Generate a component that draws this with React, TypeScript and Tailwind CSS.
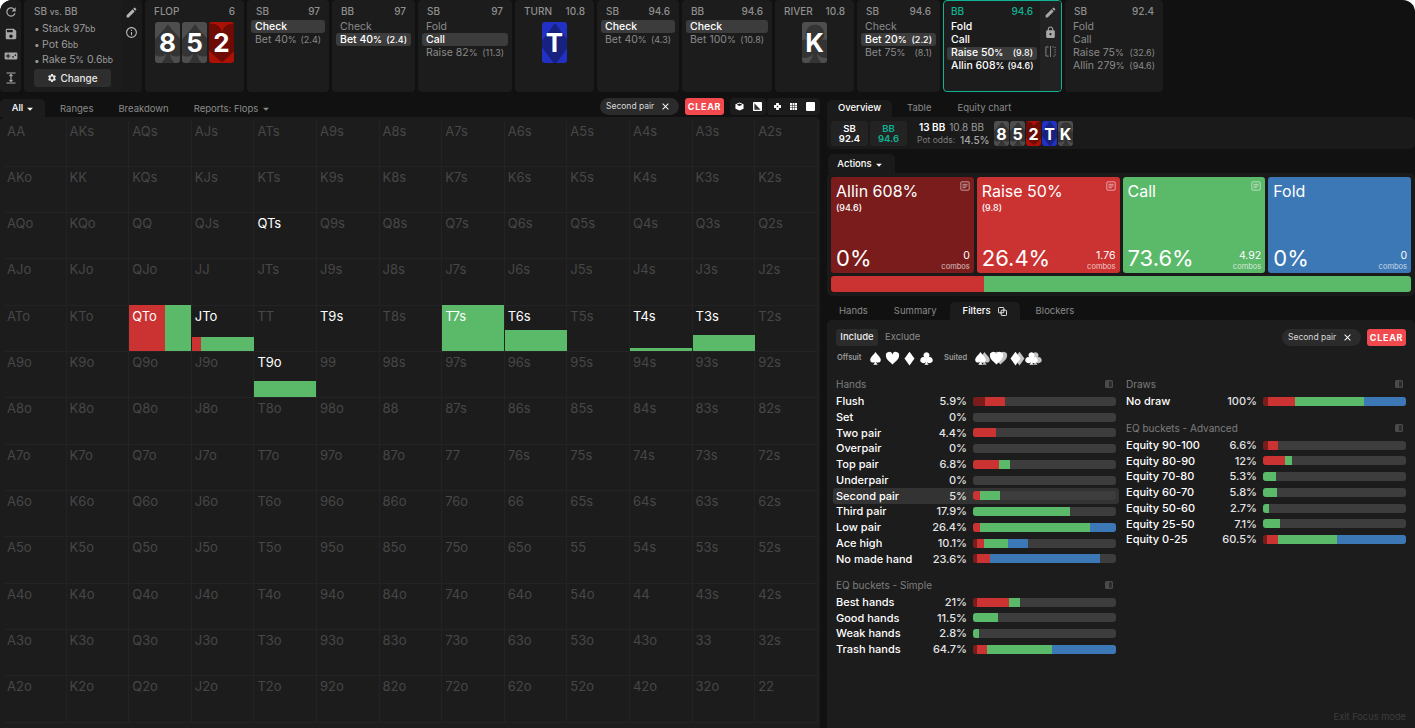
import React from "react";
import { MdEdit, MdLock, MdSave, MdVideogameAsset, MdSettings, MdRefresh, MdOutlineInfo, MdClose, MdArrowDropDown } from "react-icons/md";

type SuitName = "s" | "h" | "d" | "c";
const SUIT: Record<SuitName, string> = {
  s: "M12 1.5C9 6.5 3.5 9.5 3.5 14.2a4.3 4.3 0 0 0 7.4 3c-.2 1.9-1 3.3-2.5 4.8h7.2c-1.5-1.5-2.3-2.9-2.5-4.8a4.3 4.3 0 0 0 7.4-3C20.5 9.5 15 6.5 12 1.5z",
  h: "M12 21.5C5 15.5 1.5 12 1.5 7.7A5.3 5.3 0 0 1 12 5.8 5.3 5.3 0 0 1 22.5 7.7C22.5 12 19 15.5 12 21.5z",
  d: "M12 1 L20 12 L12 23 L4 12z",
  c: "M12 2a4.8 4.8 0 0 0-3.7 7.9A4.8 4.8 0 1 0 11 17c-.2 1.9-1 3.4-2.5 5h7c-1.5-1.6-2.3-3.1-2.5-5a4.8 4.8 0 1 0 2.7-7.1A4.8 4.8 0 0 0 12 2z",
};

function Suit({ s, className }: { s: SuitName; className?: string }) {
  return (
    <svg viewBox="0 0 24 24" className={className} fill="currentColor">
      <path d={SUIT[s]} />
    </svg>
  );
}

const CARD: Record<SuitName, string> = {
  s: "bg-[#4e4e4e] text-[#343434]",
  h: "bg-[#ad1005] text-[#6d0b04]",
  d: "bg-[#2131c6] text-[#17217f]",
  c: "bg-[#4e4e4e] text-[#343434]",
};

function PlayCard({ r, s, small }: { r: string; s: SuitName; small?: boolean }) {
  return (
    <div className={`relative overflow-hidden flex items-center justify-center rounded-[3px] ${CARD[s]} ${small ? "w-[15px] h-[25px]" : "w-[25px] h-[41px]"}`}>
      <Suit s={s} className={small ? "absolute w-[28px] h-[28px] left-[-6px] top-[-1px]" : "absolute w-[46px] h-[46px] left-[-10px] top-[-1px]"} />
      <span className={`relative text-white font-bold ${small ? "text-[16px]" : "text-[26px]"}`}>{r}</span>
    </div>
  );
}

function StreetCard({ title, value, r, w }: { title: string; value: string; r: [string, SuitName][]; w: string }) {
  return (
    <div className={`${w} h-[92px] shrink-0 rounded-[4px] bg-[#1c1c1c] px-[9px] pt-[5px]`}>
      <div className="flex justify-between text-[10px] font-medium text-[#8f8f8f] leading-[12px] h-[12px]">
        <span>{title}</span>
        <span>{value}</span>
      </div>
      <div className="flex justify-center gap-[2px] mt-[5px]">
        {r.map(([a, b]) => (
          <PlayCard key={a} r={a} s={b} />
        ))}
      </div>
    </div>
  );
}

type Act = { l: string; p?: string; sz?: string; on?: boolean; bright?: boolean };

function ActionRow({ a, teal }: { a: Act; teal?: boolean }) {
  const color = a.on || teal ? "text-white font-medium" : "text-[#8a8a8a]";
  return (
    <div className={`flex justify-between items-center h-[13px] px-[4px] rounded-[3px] text-[10.5px] whitespace-nowrap ${a.on ? "bg-[#3c3c3c]" : ""} ${color}`}>
      <span>
        {a.l}
        {a.p && <span className="text-[9px]">%</span>}
      </span>
      {a.sz && <span className="text-[9px] ml-[3px]">({a.sz})</span>}
    </div>
  );
}

function BetCard({ who, value, rows, w }: { who: string; value: string; rows: Act[]; w: string }) {
  return (
    <div className={`${w} h-[92px] shrink-0 rounded-[4px] bg-[#1c1c1c] px-[4px] pt-[5px]`}>
      <div className="flex justify-between text-[10px] font-medium text-[#8f8f8f] leading-[12px] h-[12px] px-[5px] mb-[3px]">
        <span>{who}</span>
        <span>{value}</span>
      </div>
      {rows.map((a) => (
        <ActionRow key={a.l} a={a} />
      ))}
    </div>
  );
}

function Pill({ className }: { className?: string }) {
  return (
    <div className={`flex items-center justify-between h-[17px] w-[79px] rounded-full bg-[#2b2b2b] pl-[6px] pr-[8px] text-[8.5px] text-[#d8d8d8] ${className ?? ""}`}>
      <span>Second pair</span>
      <MdClose className="w-[11px] h-[11px] text-white" />
    </div>
  );
}

function ClearBtn() {
  return (
    <div className="flex items-center justify-center h-[17px] w-[39px] rounded-[3px] bg-[#f2494f] text-[9px] font-bold tracking-[0.08em] text-white">CLEAR</div>
  );
}

const RANKS = ["A", "K", "Q", "J", "T", "9", "8", "7", "6", "5", "4", "3", "2"];
const BRIGHT = new Set(["QTs", "QTo", "JTo", "T9s", "T7s", "T6s", "T4s", "T3s", "T9o"]);
const CELLBAR: Record<string, { h: number; r: number; g: number }> = {
  QTo: { h: 46, r: 36, g: 26 },
  JTo: { h: 14, r: 9, g: 53 },
  T9o: { h: 16, r: 0, g: 62 },
  T7s: { h: 46, r: 0, g: 62 },
  T6s: { h: 21, r: 0, g: 62 },
  T4s: { h: 3, r: 0, g: 62 },
  T3s: { h: 16, r: 0, g: 62 },
};

function Cell({ label }: { label: string }) {
  const bar = CELLBAR[label];
  return (
    <div className="relative border-r border-b border-[#232323] pl-[3px] pt-[2px] text-[13px] leading-[16px]">
      {bar && (
        <div className="absolute left-0 bottom-0 flex" style={{ height: bar.h }}>
          {bar.r > 0 && <div className="bg-[#cb3232]" style={{ width: bar.r }} />}
          <div className="bg-[#5bb96a]" style={{ width: bar.g }} />
        </div>
      )}
      <span className={`relative ${BRIGHT.has(label) ? "text-white" : "text-[#474747]"}`}>{label}</span>
    </div>
  );
}

type Seg = [number, number, number, number];
type Row = { n: string; p: string; s: Seg; hl?: boolean };

function StatBar({ s }: { s: Seg }) {
  const colors = ["bg-[#7a1c1c]", "bg-[#cb3232]", "bg-[#5bb96a]", "bg-[#3b78b5]"];
  return (
    <div className="flex h-[9px] w-[143px] shrink-0 overflow-hidden rounded-[3px] bg-[#3d3d3d]">
      {s.map((w, i) => (w > 0 ? <div key={i} className={colors[i]} style={{ width: w }} /> : null))}
    </div>
  );
}

function SectionHead({ title }: { title: string }) {
  return (
    <div className="flex items-center justify-between h-[16px] text-[10px] text-[#7d7d7d]">
      <span>{title}</span>
      <svg viewBox="0 0 10 10" className="w-[8px] h-[8px] mr-[3px]">
        <rect x="0" y="0" width="10" height="10" rx="2" fill="#4a4a4a" />
        <rect x="5" y="1.5" width="3.5" height="7" rx="0.5" fill="#2a2a2a" />
      </svg>
    </div>
  );
}

function Stat({ r }: { r: Row }) {
  return (
    <div className={`flex items-center h-[15.75px] -mx-[3px] px-[3px] rounded-[3px] ${r.hl ? "bg-[#333333]" : ""}`}>
      <span className="flex-1 text-[11px] font-medium text-white whitespace-nowrap">{r.n}</span>
      <span className="text-[11px] font-medium text-[#e4e4e4] mr-[6px]">{r.p}</span>
      <StatBar s={r.s} />
    </div>
  );
}

const HANDS: Row[] = [
  { n: "Flush", p: "5.9%", s: [11.5, 20.5, 0, 0] },
  { n: "Set", p: "0%", s: [0, 0, 0, 0] },
  { n: "Two pair", p: "4.4%", s: [0, 23, 0, 0] },
  { n: "Overpair", p: "0%", s: [0, 0, 0, 0] },
  { n: "Top pair", p: "6.8%", s: [0, 26, 11, 0] },
  { n: "Underpair", p: "0%", s: [0, 0, 0, 0] },
  { n: "Second pair", p: "5%", s: [0, 7, 20, 0], hl: true },
  { n: "Third pair", p: "17.9%", s: [0, 0, 97, 0] },
  { n: "Low pair", p: "26.4%", s: [0, 7, 110, 26] },
  { n: "Ace high", p: "10.1%", s: [4, 6.5, 24, 20] },
  { n: "No made hand", p: "23.6%", s: [4, 13, 0, 110] },
];
const SIMPLE: Row[] = [
  { n: "Best hands", p: "21%", s: [4, 31.5, 11, 0] },
  { n: "Good hands", p: "11.5%", s: [0, 0, 25, 0] },
  { n: "Weak hands", p: "2.8%", s: [0, 0, 6, 0] },
  { n: "Trash hands", p: "64.7%", s: [4, 10, 65, 64] },
];
const DRAWS: Row[] = [{ n: "No draw", p: "100%", s: [5, 27, 69, 42] }];
const ADV: Row[] = [
  { n: "Equity 90-100", p: "6.6%", s: [5, 10, 0, 0] },
  { n: "Equity 80-90", p: "12%", s: [0, 22, 6.5, 0] },
  { n: "Equity 70-80", p: "5.3%", s: [0, 0, 12.5, 0] },
  { n: "Equity 60-70", p: "5.8%", s: [0, 0, 13.5, 0] },
  { n: "Equity 50-60", p: "2.7%", s: [0, 0, 6, 0] },
  { n: "Equity 25-50", p: "7.1%", s: [0, 0, 16.5, 0] },
  { n: "Equity 0-25", p: "60.5%", s: [4, 11, 59, 69] },
];

function NoteIcon() {
  return (
    <svg viewBox="0 0 12 12" className="absolute top-[4px] right-[4px] w-[10px] h-[10px]" fill="none" stroke="#ffffff" strokeOpacity="0.65" strokeWidth="1">
      <rect x="1" y="1" width="10" height="10" rx="1" />
      <path d="M3 4h6M3 6h6M3 8h4" />
    </svg>
  );
}

function ActionCard({ title, sub, pct, combos, bg, note }: { title: string; sub?: string; pct: string; combos: string; bg: string; note?: boolean }) {
  return (
    <div className={`relative flex-1 rounded-[3px] ${bg} flex flex-col justify-between pl-[5px] pr-[4px] pt-[4px] text-white`}>
      {note && <NoteIcon />}
      <div>
        <div className="text-[16px] leading-[20px]">{title}</div>
        {sub && <div className="text-[9px] font-medium leading-[12px] mt-[1px]">{sub}</div>}
      </div>
      <div className="flex items-end justify-between pb-[1px]">
        <span className="text-[22px] leading-[28px]">{pct}</span>
        <div className="text-right">
          <div className="text-[10.5px] leading-[12px]">{combos}</div>
          <div className="text-[7.5px] leading-[10px] opacity-70">combos</div>
        </div>
      </div>
    </div>
  );
}

function SuitBtn({ s, dbl, className }: { s: SuitName; dbl?: boolean; className?: string }) {
  return (
    <div className={`relative w-[14px] h-[14px] text-white ${className ?? ""}`}>
      {dbl && <Suit s={s} className="absolute left-[4px] top-[-0.5px] w-[15px] h-[15px] text-[#c4c4c4]" />}
      <Suit s={s} className="absolute left-0 top-[-0.5px] w-[15px] h-[15px]" />
    </div>
  );
}

function UnfoldIcon() {
  return (
    <svg viewBox="0 0 12 12" className="w-[12px] h-[12px]" fill="none" stroke="#a8a8a8" strokeWidth="1.1">
      <path d="M1.5 1h9M1.5 11h9M6 2.5v7M4.5 4 6 2.5 7.5 4M4.5 8 6 9.5 7.5 8" />
    </svg>
  );
}

export default function App() {
  return (
    <div className="h-[728px] w-[1415px] overflow-hidden bg-white" style={{ fontFamily: "Inter, 'Noto Sans', sans-serif" }}>
      <div className="flex h-full flex-col rounded-t-[12px] bg-[#111111] text-white">
        {/* top strip */}
        <div className="flex h-[92px] shrink-0 gap-[3px]">
          <div className="w-[21px] h-[92px] shrink-0 rounded-tl-[12px] rounded-r-[4px] rounded-bl-[4px] bg-[#1c1c1c] flex flex-col items-center pt-[5px] gap-[8px] text-[#a8a8a8] text-[14px]">
            <MdRefresh className="w-[14px] h-[14px]" />
            <MdSave className="w-[14px] h-[14px]" />
            <MdVideogameAsset className="w-[14px] h-[14px]" />
            <div className="flex h-[14px] items-center"><UnfoldIcon /></div>
          </div>
          <div className="w-[118px] h-[92px] shrink-0 flex rounded-[4px] bg-[#1c1c1c]">
            <div className="w-[97px] pl-[10px] pt-[5px]">
              <div className="text-[10px] font-medium text-[#8f8f8f] leading-[12px] mb-[3px]">SB <span className="text-[8.5px]">vs.</span> BB</div>
              {[["Stack 97", "bb"], ["Pot 6", "bb"], ["Rake 5", "% 0.6", "bb"]].map((t) => (
                <div key={t[0]} className="flex items-center h-[15.7px] text-[10.5px] text-[#9a9a9a] whitespace-nowrap">
                  <span className="w-[8px] pl-[0px] text-[10px]">•</span>
                  <span>{t[0]}<span className="text-[8.5px]">{t.length === 3 ? "%" : t[1]}</span>{t.length === 3 && " 0.6"}{t.length === 3 && <span className="text-[8.5px]">bb</span>}</span>
                </div>
              ))}
              <div className="mt-[1px] flex h-[18px] w-[77px] items-center justify-center gap-[3px] rounded-[3px] bg-[#2e2e2e] text-[10px] font-medium text-[#e8e8e8]">
                <MdSettings className="w-[10px] h-[10px]" />
                Change
              </div>
            </div>
            <div className="flex-1 flex flex-col items-center pt-[6px] gap-[7px] rounded-r-[4px] bg-[#1a1a1a] text-[#b5b5b5]">
              <MdEdit className="w-[13px] h-[13px]" />
              <MdOutlineInfo className="w-[13px] h-[13px]" />
            </div>
          </div>
          <StreetCard title="FLOP" value="6" w="w-[99px]" r={[["8", "s"], ["5", "s"], ["2", "h"]]} />
          <BetCard who="SB" value="97" w="w-[82px]" rows={[{ l: "Check", on: true }, { l: "Bet 40", p: "%", sz: "2.4" }]} />
          <BetCard who="BB" value="97" w="w-[83px]" rows={[{ l: "Check" }, { l: "Bet 40", p: "%", sz: "2.4", on: true }]} />
          <BetCard who="SB" value="97" w="w-[94px]" rows={[{ l: "Fold" }, { l: "Call", on: true }, { l: "Raise 82", p: "%", sz: "11.3" }]} />
          <StreetCard title="TURN" value="10.8" w="w-[79px]" r={[["T", "d"]]} />
          <BetCard who="SB" value="94.6" w="w-[82px]" rows={[{ l: "Check", on: true }, { l: "Bet 40", p: "%", sz: "4.3" }]} />
          <BetCard who="BB" value="94.6" w="w-[90px]" rows={[{ l: "Check", on: true }, { l: "Bet 100", p: "%", sz: "10.8" }]} />
          <StreetCard title="RIVER" value="10.8" w="w-[79px]" r={[["K", "c"]]} />
          <BetCard who="SB" value="94.6" w="w-[83px]" rows={[{ l: "Check" }, { l: "Bet 20", p: "%", sz: "2.2", on: true }, { l: "Bet 75", p: "%", sz: "8.1" }]} />
          <div className="w-[119px] h-[92px] shrink-0 flex overflow-hidden rounded-[4px] border-[1.5px] border-[#10b394] bg-[#1c1c1c]">
            <div className="flex-1 min-w-0 px-[3px] pt-[3.5px]">
              <div className="flex justify-between text-[10px] font-medium text-[#10b394] leading-[12px] h-[12px] px-[4px] mb-[4px]">
                <span>BB</span>
                <span>94.6</span>
              </div>
              <ActionRow teal a={{ l: "Fold" }} />
              <ActionRow teal a={{ l: "Call" }} />
              <ActionRow a={{ l: "Raise 50", p: "%", sz: "9.8", on: true }} />
              <ActionRow teal a={{ l: "Allin 608", p: "%", sz: "94.6" }} />
            </div>
            <div className="w-[21px] shrink-0 bg-[#222222] flex flex-col items-center pt-[5px] gap-[7px] text-[#a8a8a8]">
              <MdEdit className="w-[13px] h-[13px]" />
              <MdLock className="w-[13px] h-[13px]" />
              <svg viewBox="0 0 12 12" className="w-[11px] h-[11px]" fill="none" stroke="#8a8a8a" strokeWidth="1">
                <path d="M4 1H1v10h3M6 0v12" />
                <path d="M8 1h3v10H8" strokeDasharray="1.5 1.2" />
              </svg>
            </div>
          </div>
          <BetCard who="SB" value="92.4" w="w-[98px]" rows={[{ l: "Fold" }, { l: "Call" }, { l: "Raise 75", p: "%", sz: "32.6" }, { l: "Allin 279", p: "%", sz: "94.6" }]} />
        </div>

        {/* body */}
        <div className="flex flex-1 gap-[7px] min-h-0 pt-[7px]">
          {/* left */}
          <div className="w-[820px] shrink-0 flex flex-col">
            <div className="flex items-start h-[18px] text-[9.5px] text-[#8a8a8a] relative">
              <div className="flex h-[18px] w-[45px] items-center justify-center rounded-t-[5px] bg-[#1c1c1c] font-medium text-white pl-[4px] pt-[1px]">
                All
                <MdArrowDropDown className="w-[14px] h-[14px]" />
              </div>
              <span className="ml-[15px] leading-[18px] pt-[1px]">Ranges</span>
              <span className="ml-[25px] leading-[18px] pt-[1px]">Breakdown</span>
              <span className="ml-[25px] leading-[18px] pt-[1px] flex items-center">
                Reports: Flops
                <MdArrowDropDown className="w-[14px] h-[14px] ml-[1px]" />
              </span>
              <div className="ml-auto flex items-center">
                <Pill className="-mt-[1px]" />
                <div className="ml-[6px] -mt-[1px]"><ClearBtn /></div>
                <div className="ml-[6px] -mt-[1px] flex h-[17px] w-[36px] items-center rounded-[4px] bg-[#1c1c1c] pl-[5px] gap-[9px]">
                  <svg viewBox="0 0 10 10" className="w-[9px] h-[9px]" fill="#fff"><path d="M5 0.5 9.5 2.5v5L5 9.5.5 7.5v-5zM1.8 3 5 4.5 8.2 3 5 1.6z" /></svg>
                  <svg viewBox="0 0 10 10" className="w-[9px] h-[9px]"><rect width="10" height="10" rx="1" fill="#fff" /><path d="M1.5 1.5 8.5 8.5H1.5z" fill="#333" /></svg>
                </div>
                <div className="ml-[1px] -mt-[1px] flex h-[17px] w-[53px] items-center rounded-[4px] bg-[#1c1c1c] pl-[7px] gap-[9px]">
                  <svg viewBox="0 0 10 10" className="w-[7px] h-[7px]" fill="#fff"><path d="M3 0h4v3h3v4H7v3H3V7H0V3h3zM4 4v2h2V4z" /></svg>
                  <svg viewBox="0 0 10 10" className="w-[7px] h-[7px]" fill="#fff"><path d="M0 0h2.8v2.8H0zM3.6 0h2.8v2.8H3.6zM7.2 0H10v2.8H7.2zM0 3.6h2.8v2.8H0zM3.6 3.6h2.8v2.8H3.6zM7.2 3.6H10v2.8H7.2zM0 7.2h2.8V10H0zM3.6 7.2h2.8V10H3.6zM7.2 7.2H10V10H7.2z" /></svg>
                  <div className="w-[9px] h-[9px] bg-white rounded-[1px]" />
                </div>
              </div>
            </div>
            <div className="flex-1 min-h-0 rounded-t-[5px] bg-[#1c1c1c] pl-[4px] pt-[3.5px] grid grid-cols-[repeat(13,62.6px)] grid-rows-[repeat(13,46.33px)]">
              {RANKS.flatMap((a, i) =>
                RANKS.map((b, j) => {
                  const label = i === j ? a + b : i < j ? a + b + "s" : b + a + "o";
                  return <Cell key={label} label={label} />;
                })
              )}
            </div>
          </div>

          {/* right */}
          <div className="flex-1 min-w-0 flex flex-col">
            <div className="flex h-[18px] items-center pt-[1px] text-[9.5px] text-[#8a8a8a]">
              <div className="flex h-[18px] w-[65px] items-center justify-center rounded-t-[5px] bg-[#1a1a1a] font-medium text-white">Overview</div>
              <span className="ml-[15px]">Table</span>
              <span className="ml-[26px]">Equity chart</span>
            </div>
            <div className="flex h-[32px] items-center rounded-b-[5px] rounded-tr-[5px] bg-[#1a1a1a] pl-[4px] pt-[1px]">
              <div className="w-[37px] h-[25px] rounded-[3px] bg-[#232323] text-center text-[9.5px] font-semibold leading-[10px] pt-[3px]">SB<br />92.4</div>
              <div className="ml-[2px] w-[37px] h-[25px] rounded-[3px] bg-[#232323] text-center text-[9.5px] font-semibold leading-[10px] pt-[3px] text-[#10b394]">BB<br />94.6</div>
              <div className="ml-[10px] w-[77px] text-[10px]">
                <div className="flex gap-[4px] font-semibold pl-[2px] leading-[13px]">
                  <span>13 BB</span>
                  <span className="font-normal text-[#9a9a9a]">10.8 BB</span>
                </div>
                <div className="flex items-center gap-[5px] leading-[13px]">
                  <span className="text-[8.5px] text-[#7d7d7d] whitespace-nowrap">Pot odds:</span>
                  <span className="text-[#a8a8a8] font-medium">14.5%</span>
                </div>
              </div>
              <div className="flex gap-px ml-[0px]">
                <PlayCard small r="8" s="s" />
                <PlayCard small r="5" s="s" />
                <PlayCard small r="2" s="h" />
                <PlayCard small r="T" s="d" />
                <PlayCard small r="K" s="c" />
              </div>
            </div>

            <div className="mt-[5px] flex h-[19px] w-[67px] items-center justify-center rounded-t-[5px] bg-[#1a1a1a] pt-[2px] text-[9.5px] font-medium text-white ml-[1px]">
              Actions
              <MdArrowDropDown className="w-[14px] h-[14px]" />
            </div>
            <div className="h-[123px] rounded-[5px] bg-[#1a1a1a] px-[4px] pt-[4px]">
              <div className="flex h-[96px] gap-[3px]">
                <ActionCard title="Allin 608%" sub="(94.6)" pct="0%" combos="0" bg="bg-[#7a1c1c]" note />
                <ActionCard title="Raise 50%" sub="(9.8)" pct="26.4%" combos="1.76" bg="bg-[#cb3232]" note />
                <ActionCard title="Call" pct="73.6%" combos="4.92" bg="bg-[#5bb96a]" note />
                <ActionCard title="Fold" pct="0%" combos="0" bg="bg-[#3b78b5]" />
              </div>
              <div className="mt-[3px] flex h-[16px] overflow-hidden rounded-[3px]">
                <div className="w-[153px] bg-[#cb3232]" />
                <div className="flex-1 bg-[#5bb96a]" />
              </div>
            </div>

            <div className="mt-[6px] flex h-[18px] items-center text-[9.5px] text-[#8a8a8a]">
              <span className="ml-[12px]">Hands</span>
              <span className="ml-[26px]">Summary</span>
              <div className="ml-[13px] flex h-[18px] w-[70px] items-center justify-center gap-[7px] rounded-t-[5px] bg-[#1c1c1c] font-medium text-white">
                Filters
                <svg viewBox="0 0 10 10" className="w-[9px] h-[9px]" fill="none" stroke="#fff" strokeWidth="1"><rect x="0.5" y="0.5" width="6" height="6" rx="1" /><rect x="3.5" y="3.5" width="6" height="6" rx="1" /></svg>
              </div>
              <span className="ml-[16px]">Blockers</span>
            </div>
            <div className="flex-1 min-h-0 rounded-t-[5px] bg-[#1c1c1c] flex flex-col px-[9px] pt-[9px]">
              <div className="flex items-center justify-between h-[17px]">
                <div className="flex items-center text-[9.5px]">
                  <div className="flex h-[17px] w-[42px] items-center justify-center rounded-[3px] bg-[#2b2b2b] font-medium text-[#ededed]">Include</div>
                  <span className="ml-[7px] text-[#8a8a8a]">Exclude</span>
                </div>
                <div className="flex items-center gap-[6px]">
                  <Pill />
                  <ClearBtn />
                </div>
              </div>
              <div className="flex items-center h-[14px] mt-[5px] text-[7.5px] font-semibold text-[#9a9a9a] pl-[1px]">
                <span className="w-[31px]">Offsuit</span>
                <div className="flex gap-[3px]">
                  <SuitBtn s="s" /><SuitBtn s="h" /><SuitBtn s="d" /><SuitBtn s="c" />
                </div>
                <span className="ml-[11px] w-[29px]">Suited</span>
                <div className="flex">
                  <SuitBtn s="s" dbl className="mr-[2px]" />
                  <SuitBtn s="h" dbl className="mr-[5px]" />
                  <SuitBtn s="d" dbl className="mr-[2px]" />
                  <SuitBtn s="c" dbl />
                </div>
              </div>
              <div className="flex gap-[10px] mt-[11px]">
                <div className="w-[280px] shrink-0">
                  <SectionHead title="Hands" />
                  <div className="mt-[1.5px]">
                    {HANDS.map((r) => <Stat key={r.n} r={r} />)}
                  </div>
                  <div className="mt-[10.5px]"><SectionHead title="EQ buckets - Simple" /></div>
                  <div className="mt-[1px]">
                    {SIMPLE.map((r) => <Stat key={r.n} r={r} />)}
                  </div>
                </div>
                <div className="w-[280px] shrink-0">
                  <SectionHead title="Draws" />
                  <div className="mt-[1.5px]">
                    {DRAWS.map((r) => <Stat key={r.n} r={r} />)}
                  </div>
                  <div className="mt-[11px]"><SectionHead title="EQ buckets - Advanced" /></div>
                  <div className="mt-[1px]">
                    {ADV.map((r) => <Stat key={r.n} r={r} />)}
                  </div>
                </div>
              </div>
              <div className="mt-auto mb-[4px] text-right text-[9.3px] text-[#3d3d3d]">Exit Focus mode</div>
            </div>
          </div>
        </div>
      </div>
    </div>
  );
}
